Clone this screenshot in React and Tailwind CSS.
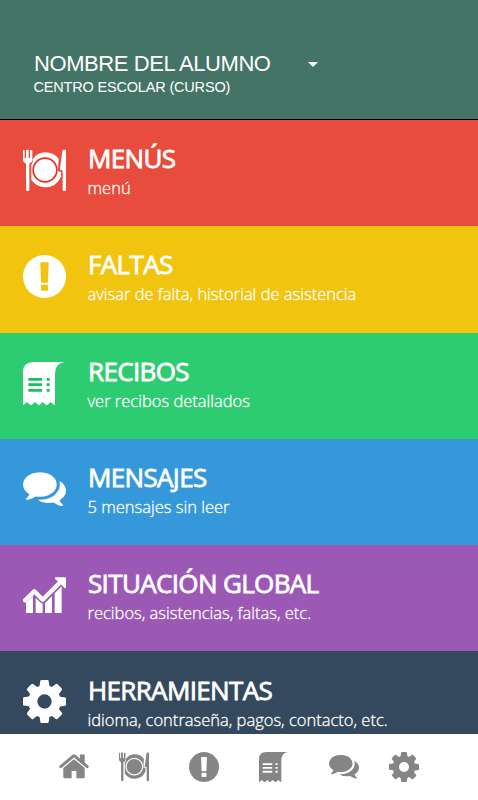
const PlateIcon = ({ className }) => (
  <svg viewBox="0 0 129 129" fill="currentColor" className={className}>
    <path d="M0 5q0-2 2-2h1q2 0 2 2v22h4V4q0-2 2-2h4q2 0 2 2v23h4V5q0-2 2-2h3q2 0 2 2v27q0 8-7 10l-2 4v76q0 4-5 4t-5-4V46l-2-4q-7-2-7-10z" />
    <path d="M30 30Q43 10 66 10q25 0 41 19l-2 35q0 4 4 4h5v15q-14 32-48 32-24 0-41-22V46q5-3 4-16z" />
    <path d="M129 3v119q0 4-5 4t-5-4V64h-6q-3 0-2-4l7-54q3-6 11-3z" />
    <circle cx="66" cy="63" r="35.500" fill="none" stroke="var(--cut)" strokeWidth="5" />
  </svg>
);

const AlertIcon = ({ className }) => (
  <svg viewBox="0 0 129 129" fill="currentColor" className={className}>
    <path
      fillRule="evenodd"
      d="M64.500 0a64.500 64.500 0 1 0 .1 0zM54 22h21q2 0 2 2l-2 57q0 2-2 2H56q-2 0-2-2l-2-57q0-2 2-2zM56 89h17q2 0 2 2v14q0 2-2 2H56q-2 0-2-2V91q0-2 2-2z"
    />
  </svg>
);

const ReceiptIcon = ({ className }) => (
  <svg viewBox="0 0 129 129" fill="currentColor" className={className}>
    <path d="M0 30Q0 0 32 0h93Q96 4 96 36v92l-3 1-10-9-10 9h-4l-10-9-10 9h-3l-10-9-10 9h-4l-10-9-10 9H0z" />
    <path
      d="M16 52h41M16 68h41M16 85h41M71 52h9M71 68h9M71 85h9"
      stroke="var(--cut)"
      strokeWidth="8"
    />
  </svg>
);

const CommentsIcon = ({ className }) => (
  <svg viewBox="0 80 1792 1792" fill="currentColor" className={className}>
    <path d="M1408 768q0 139-94 257t-256.500 186.500-353.500 68.500q-86 0-176-16-124 88-278 128-36 9-86 16h-3q-11 0-20.500-8t-11.500-21q-1-3-1-6.500t.5-6.500 2-6l2.500-5 3.500-5.500 4-5 4.500-5 4-4.500q5-6 23-25t26-29.500 22.500-29 25-38.500 20.500-44q-124-72-195-177t-71-224q0-139 94-257t256.500-186.500 353.500-68.500 353.500 68.500 256.500 186.500 94 257zm384 256q0 120-71 224.500t-195 176.500q10 24 20.500 44t25 38.500 22.500 29 26 29.500 23 25q1 1 4 4.500t4.500 5 4 5 3.500 5.500l2.500 5 2 6 .5 6.500-1 6.500q-3 14-13 22t-22 7q-50-7-86-16-154-40-278-128-90 16-176 16-271 0-472-132 58 4 88 4 161 0 309-45t264-129q125-92 192-212t67-254q0-77-23-152 129 71 204 178t75 230z" />
  </svg>
);

const ChartIcon = ({ className }) => (
  <svg viewBox="0 0 129 129" fill="currentColor" className={className}>
    <path d="M9 86l21-20v49q0 2-2 2H11q-2 0-2-2zM38 72l17 16h4v27q0 2-2 2H40q-2 0-2-2zM66 87l21-21v49q0 2-2 2H68q-2 0-2-2zM95 58l21-21v78q0 2-2 2H97q-2 0-2-2z" />
    <path d="M6 79l28-27 25 25 54-54" fill="none" stroke="currentColor" strokeWidth="13" strokeLinecap="round" strokeLinejoin="round" />
    <path d="M98 10h28q3 0 3 3v27q-1 4-4 2L96 14q-1-3 2-4z" />
  </svg>
);

const GearIcon = ({ className }) => (
  <svg viewBox="128 128 1536 1536" fill="currentColor" className={className}>
    <path d="M1152 896q0-106-75-181t-181-75-181 75-75 181 75 181 181 75 181-75 75-181zm512-109v222q0 12-8 23t-20 13l-185 28q-19 54-39 91 35 50 107 138 10 12 10 25t-9 23q-27 37-99 108t-94 71q-12 0-26-9l-138-108q-44 23-91 38-16 136-29 186-7 28-36 28h-222q-14 0-24.500-8.500t-11.500-21.500l-28-184q-49-16-90-37l-141 107q-10 9-25 9-14 0-25-11-126-114-165-168-7-10-7-23 0-12 8-23 15-21 51-66.500t54-70.500q-27-50-41-99l-183-27q-13-2-21-12.500t-8-23.500v-222q0-12 8-23t19-13l186-28q14-46 39-92-40-57-107-138-10-12-10-24 0-10 9-23 26-36 98.500-107.500t94.500-71.500q13 0 26 10l138 107q44-23 91-38 16-136 29-186 7-28 36-28h222q14 0 24.500 8.500t11.500 21.500l28 184q49 16 90 37l142-107q9-9 24-9 13 0 25 10 129 119 165 170 7 8 7 22 0 12-8 23-15 21-51 66.500t-54 70.500q26 50 41 98l183 28q13 2 21 12.500t8 23.500z" />
  </svg>
);

const HomeIcon = ({ className }) => (
  <svg viewBox="89 128 1614 1614" fill="currentColor" className={className}>
    <path d="M1472 992v480q0 26-19 45t-45 19h-384v-384h-256v384h-384q-26 0-45-19t-19-45v-480q0-1 .5-3t.5-3l575-474 575 474q1 2 1 6zm223-69l-62 74q-8 9-21 11h-3q-13 0-21-7l-692-577-692 577q-12 8-24 7-13-2-21-11l-62-74q-8-10-7-23.500t11-21.500l719-599q32-26 76-26t76 26l244 204v-195q0-14 9-23t23-9h192q14 0 23 9t9 23v408l219 182q10 8 11 21.500t-7 23.500z" />
  </svg>
);

const sections = [
  { title: 'MENÚS', text: 'menú', Icon: PlateIcon, color: 'bg-[#e84c3d] [--cut:#e8301f]' },
  { title: 'FALTAS', text: 'avisar de falta, historial de asistencia', Icon: AlertIcon, color: 'bg-[#f1c40f]' },
  { title: 'RECIBOS', text: 'ver recibos detallados', Icon: ReceiptIcon, color: 'bg-[#2ecc71] [--cut:#12c45c]' },
  { title: 'MENSAJES', text: '5 mensajes sin leer', Icon: CommentsIcon, color: 'bg-[#3598db]' },
  { title: 'SITUACIÓN GLOBAL', text: 'recibos, asistencias, faltas, etc.', Icon: ChartIcon, color: 'bg-[#9b59b5]' },
  { title: 'HERRAMIENTAS', text: 'idioma, contraseña, pagos, contacto, etc.', Icon: GearIcon, color: 'bg-[#34495e]' },
];

const App = () => {
  return (
    <div className="flex h-[800px] w-[478px] flex-col overflow-hidden bg-white">
      {/* Student header */}
      <header className="h-[120px] shrink-0 border-b border-black bg-[#437466] pl-[34px] pt-[51px] font-['Liberation_Sans',sans-serif] text-white">
        <div className="flex items-center">
          <h1 className="w-[274px] whitespace-nowrap text-[22px] leading-[26px] tracking-[-0.42px]">NOMBRE DEL ALUMNO</h1>
          <svg viewBox="0 0 10 5" fill="currentColor" className="mt-[1px] h-[5px] w-[10px]">
            <path d="M0 0h10L5 5z" />
          </svg>
        </div>
        <p className="-ml-[0.5px] text-[14.500px] leading-[20px] tracking-[-0.18px]">CENTRO ESCOLAR (CURSO)</p>
      </header>

      {/* Sections */}
      <main className="min-h-0 flex-1 overflow-hidden font-['Open_Sans',sans-serif] text-white">
        {sections.map(({ title, text, Icon, color }) => (
          <section key={title} className={`flex h-[106.3px] pl-[23px] ${color}`}>
            <Icon className="mt-[29px] h-[43px] w-[43px] shrink-0" />
            <div className="whitespace-nowrap pl-[22px] pt-[23.200px]">
              <h2 className="text-[26px] leading-[30px] tracking-[-0.65px] [-webkit-text-stroke:0.8px_currentColor]">{title}</h2>
              <p className="-ml-[0.5px] text-[16.500px] font-light leading-[29px] [-webkit-text-stroke:0.3px_currentColor]">{text}</p>
            </div>
          </section>
        ))}
      </main>

      {/* Bottom navigation */}
      <nav className="flex h-[66px] shrink-0 bg-white pl-[59px] pt-[18px] text-[#858585] [--cut:#ffffff]">
        <HomeIcon className="h-[30px] w-[30px]" />
        <PlateIcon className="ml-[30px] h-[30px] w-[30px]" />
        <AlertIcon className="ml-[40px] h-[30px] w-[30px]" />
        <ReceiptIcon className="ml-[40px] h-[30px] w-[30px]" />
        <CommentsIcon className="ml-[40px] h-[30px] w-[30px]" />
        <GearIcon className="ml-[30px] h-[30px] w-[30px]" />
      </nav>
    </div>
  );
};

export default App;
